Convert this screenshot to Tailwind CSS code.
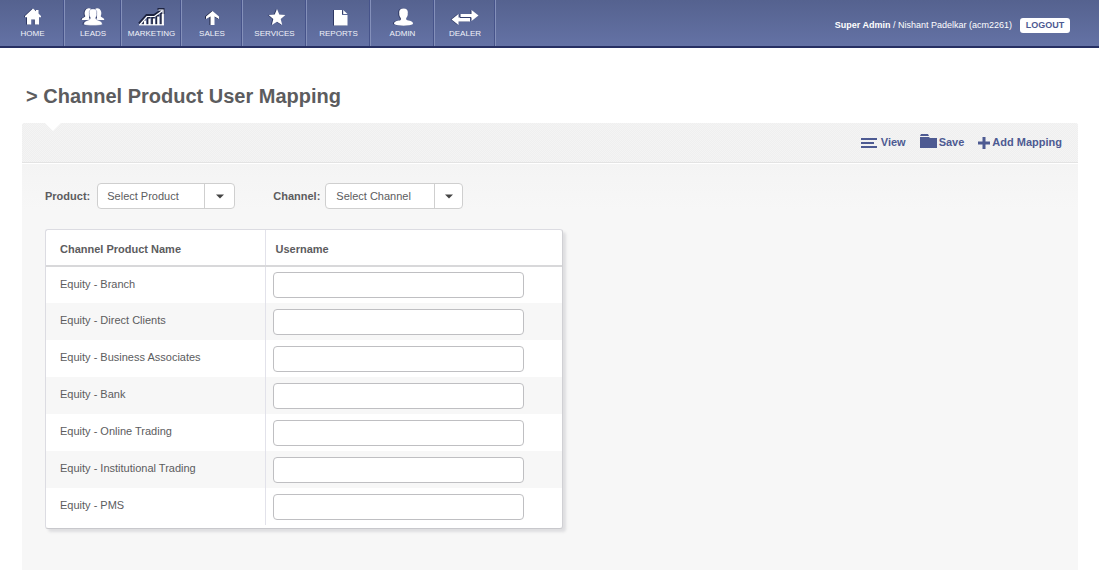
<!DOCTYPE html>
<html lang="en">
<head>
<meta charset="utf-8">
<meta name="viewport" content="width=device-width, initial-scale=1">
<title>Channel Product User Mapping</title>
<script src="https://cdn.jsdelivr.net/npm/@tailwindcss/browser@4"></script>
</head>
<body class="flex min-h-screen flex-col bg-white font-['Liberation_Sans',Arial,sans-serif] text-[11px] text-[#5c5c5e]">

<header class="flex h-12 items-stretch justify-between border-b-2 border-b-[#262f62] bg-linear-to-b from-[#55628f] to-[#6472a5] text-white">
  <nav aria-label="Main" class="flex pl-px text-[8px] leading-[10px] text-[#f0f2f9]">
    <a href="#" class="flex w-16 flex-col items-center gap-[2px] border-r border-[#8490ba] pt-[7px] shadow-[inset_-1px_0_0_#46538a]">
      <svg class="h-5 w-7 text-white drop-shadow-[-1px_0_0_#2d3762]" viewBox="0 0 28 20" fill="currentColor"><path d="M14 1.500l3 2.800V3h2.500v3.500L22 9v1.200h-2V17.500h-4.200v-5h-3.600v5H8v-7.300H6V9z"/></svg>
      HOME
    </a>
    <a href="#" class="flex w-[57px] flex-col items-center gap-[2px] border-r border-[#8490ba] pt-[7px] shadow-[inset_-1px_0_0_#46538a]">
      <svg class="h-5 w-7 text-white drop-shadow-[-1px_0_0_#2d3762]" viewBox="0 0 28 20" fill="currentColor"><path d="M8.500 1.500c1.600-.5 3-.2 3.500.4L10 5v5.500l1 2.500H2.700c.1-2.500 3.500-2.300 3.600-4C5.200 7.500 5.200 2.500 8.500 1.500zM19.500 1.500c-1.600-.5-3-.2-3.500.4L18 5v5.500l-1 2.500h8.300c-.1-2.500-3.500-2.300-3.600-4 1.100-1.500 1.100-6.500-2.200-7.500z"/><path d="M14 2c3.300 0 4.200 2 3.700 4.700.4 1.400-.2 2.800-1 3.600-.5 2.200.8 2.400 2.800 3.100 2.600.8 3.700 1.800 3.700 4.100-3 1.300-15.400 1.300-18.400 0 0-2.300 1.100-3.300 3.700-4.100 2-.7 3.300-.9 2.800-3.100-.8-.8-1.400-2.200-1-3.600C9.800 4 10.700 2 14 2z" stroke="#7a87b3" stroke-width=".4"/></svg>
      LEADS
    </a>
    <a href="#" class="flex w-15 flex-col items-center gap-[2px] border-r border-[#8490ba] pt-[7px] shadow-[inset_-1px_0_0_#46538a]">
      <svg class="h-5 w-7 text-white" viewBox="0 0 28 20" fill="none" stroke="currentColor"><path d="M1 16.500L8.500 8h7.500L23 3.200M19.500 2h6v5" stroke="#1d2340" stroke-width="2"/><path d="M6 18v-5M10.500 18v-8M15 18v-8M19.300 18V8M23.800 18V5.500" stroke="#1d2340" stroke-width="3.200"/><path d="M2 17.500L9 9.500h7.500L24 4M20.500 3H25v4" stroke-width="1.200"/><path d="M1 17.800h25" stroke-width="1.200"/><path d="M7 18v-4.500M11.500 18v-6.500M16 18v-6.500M20.300 18V9.500M24.800 18V7" stroke-width="2.200"/></svg>
      MARKETING
    </a>
    <a href="#" class="flex w-[61px] flex-col items-center gap-[2px] border-r border-[#8490ba] pt-[7px] shadow-[inset_-1px_0_0_#46538a]">
      <svg class="h-5 w-7 text-white drop-shadow-[-1px_0_0_#1d2340]" viewBox="0 0 28 20" fill="currentColor"><path d="M14.500 4l6.500 5.500v2.500l-4.500-2.500V18h-4V9.500L8 12V9.500z"/></svg>
      SALES
    </a>
    <a href="#" class="flex w-16 flex-col items-center gap-[2px] border-r border-[#8490ba] pt-[7px] shadow-[inset_-1px_0_0_#46538a]">
      <svg class="h-5 w-7 text-white drop-shadow-[-1px_0_0_#2d3762]" viewBox="0 0 28 20" fill="currentColor"><path d="M16 2l2.300 5.600 6.100.4-4.700 4 1.500 6L16 14.700 10.800 18l1.500-6-4.700-4 6.100-.4z"/></svg>
      SERVICES
    </a>
    <a href="#" class="flex w-16 flex-col items-center gap-[2px] border-r border-[#8490ba] pt-[7px] shadow-[inset_-1px_0_0_#46538a]">
      <svg class="h-5 w-7 text-white drop-shadow-[-1px_0_0_#2d3762]" viewBox="0 0 28 20" fill="currentColor"><path d="M9 3h8v5h5.500v10.500H9z"/><path d="M18.200 3l4.300 4h-4.300z"/></svg>
      REPORTS
    </a>
    <a href="#" class="flex w-16 flex-col items-center gap-[2px] border-r border-[#8490ba] pt-[7px] shadow-[inset_-1px_0_0_#46538a]">
      <svg class="h-5 w-7 text-white drop-shadow-[-1px_0_0_#2d3762]" viewBox="0 0 28 20" fill="currentColor"><path d="M14.500 1.500c3.400 0 4.800 2.200 4.200 5 .3 2-.5 3.300-1.500 4.500-.3 2 .4 2.200 2.500 2.600 3 .6 4.300 1.400 4.300 3.400-3 2.200-16 2.200-19 0 0-2 1.500-2.800 4.500-3.400 2.100-.4 2.600-.6 2.300-2.600-1-1.200-1.800-2.500-1.500-4.500-.6-2.800.8-5 4.200-5z"/></svg>
      ADMIN
    </a>
    <a href="#" class="flex w-[61px] flex-col items-center gap-[2px] border-r border-[#8490ba] pt-[7px] shadow-[inset_-1px_0_0_#46538a]">
      <svg class="h-5 w-7 text-white drop-shadow-[-1px_0_0_#2d3762]" viewBox="0 0 28 20" fill="currentColor"><path d="M20.500 3l7 5.500-7 5.500v-3.500H9.500V7h11z"/><path d="M7.500 7L0.500 12.500l7 5.500v-3.500h11.500V10.500H7.500z"/><path d="M9 10.500h11" stroke="#35406f" stroke-width="1"/></svg>
      DEALER
    </a>
  </nav>
  <div class="flex items-center gap-2 pt-[5px] pr-[29px] text-[9px]">
    <p><b>Super Admin</b> / Nishant Padelkar (acm2261)</p>
    <button type="button" class="h-[15px] w-[50px] rounded-[3px] bg-white text-[9px] leading-[15px] font-bold text-[#4d5a92]">LOGOUT</button>
  </div>
</header>

<main class="flex grow flex-col pt-8 pr-[21px] pl-[22px]">
  <h1 class="pl-1 text-[20px] leading-8 font-bold">&gt; Channel Product User Mapping</h1>

  <section class="mt-[11px] grow rounded-t-[3px] bg-[#f7f7f7]">
    <div class="relative flex h-10 items-center justify-end gap-[14px] rounded-t-[3px] border-b border-[#e3e3e3] bg-[#f2f2f2] bg-[conic-gradient(#f4f4f4_25%,#efefef_0_50%,#f4f4f4_0_75%,#efefef_0)] bg-[length:2px_2px] pr-4 font-bold text-[#4d5a92]">
      <span class="absolute top-0 left-[23px] h-2 w-4 bg-white [clip-path:polygon(0_0,100%_0,50%_100%)]"></span>
      <button type="button" class="flex items-center gap-1">
        <svg class="h-4 w-4" viewBox="0 0 16 16" fill="currentColor"><path d="M0 3h16v2H0zM0 7h13v2H0zM0 11h16v2H0z"/></svg>
        View
      </button>
      <button type="button" class="flex items-center gap-[2px]">
        <svg class="mb-1 h-4 w-[17px]" viewBox="0 0 17 16" fill="currentColor"><path d="M1 1h7l1 2H0zM0 4h9l1 1h7v10H0z"/></svg>
        Save
      </button>
      <button type="button" class="flex items-center gap-[2px]">
        <svg class="h-3 w-3" viewBox="0 0 12 12" fill="currentColor"><path d="M4.500 0h3v4.500H12v3H7.500V12h-3V7.500H0v-3h4.500z"/></svg>
        Add Mapping
      </button>
    </div>

    <div class="flex gap-[38px] border-t border-white bg-linear-to-b from-[#f4f4f4] to-[#f7f7f7] pt-[19px] pl-[23px]">
      <div class="flex items-center gap-[7px]">
        <label for="product" class="font-bold">Product:</label>
        <div class="relative">
          <select id="product" class="h-[26px] w-[138px] appearance-none rounded-[4px] border border-[#cfcfcf] bg-white pr-8 pl-[9px]"><option>Select Product</option></select>
          <span class="pointer-events-none absolute inset-y-0 right-0 flex w-[31px] items-center justify-center border-l border-[#cfcfcf]"><svg class="h-[5px] w-2" viewBox="0 0 8 5" fill="#444"><path d="M0 0.500h8L4 4.500z"/></svg></span>
        </div>
      </div>
      <div class="flex items-center gap-[5px]">
        <label for="channel" class="font-bold">Channel:</label>
        <div class="relative">
          <select id="channel" class="h-[26px] w-[138px] appearance-none rounded-[4px] border border-[#cfcfcf] bg-white pr-8 pl-[10px]"><option>Select Channel</option></select>
          <span class="pointer-events-none absolute inset-y-0 right-0 flex w-[29px] items-center justify-center border-l border-[#cfcfcf]"><svg class="h-[5px] w-2" viewBox="0 0 8 5" fill="#444"><path d="M0 0.500h8L4 4.500z"/></svg></span>
        </div>
      </div>
    </div>

    <div class="mt-5 ml-[23px] max-w-[518px] rounded-[3px] border border-[#dcdce2] border-r-[#d0d0d4] border-b-[#c8c8cc] bg-white pb-[3px] shadow-[3px_3px_3px_#dedee0]">
      <table class="w-full table-fixed text-left">
        <thead>
          <tr class="h-9 border-b-2 border-[#d8d8da]">
            <th scope="col" class="w-[219px] border-r border-[#e2e2ea] pt-1 pl-[14px]">Channel Product Name</th>
            <th scope="col" class="pt-1 pl-[10px]">Username</th>
          </tr>
        </thead>
        <tbody>
          <tr class="h-[37px] even:bg-[#f7f7f7]">
            <td class="border-r border-[#e2e2ea] pb-[2px] pl-[14px]"><label for="u1">Equity - Branch</label></td>
            <td class="pl-[7px]"><input id="u1" type="text" class="block h-[26px] w-[251px] rounded-[4px] border border-[#bfbfc2] bg-white px-2"></td>
          </tr>
          <tr class="h-[37px] even:bg-[#f7f7f7]">
            <td class="border-r border-[#e2e2ea] pb-[2px] pl-[14px]"><label for="u2">Equity - Direct Clients</label></td>
            <td class="pl-[7px]"><input id="u2" type="text" class="block h-[26px] w-[251px] rounded-[4px] border border-[#bfbfc2] bg-white px-2"></td>
          </tr>
          <tr class="h-[37px] even:bg-[#f7f7f7]">
            <td class="border-r border-[#e2e2ea] pb-[2px] pl-[14px]"><label for="u3">Equity - Business Associates</label></td>
            <td class="pl-[7px]"><input id="u3" type="text" class="block h-[26px] w-[251px] rounded-[4px] border border-[#bfbfc2] bg-white px-2"></td>
          </tr>
          <tr class="h-[37px] even:bg-[#f7f7f7]">
            <td class="border-r border-[#e2e2ea] pb-[2px] pl-[14px]"><label for="u4">Equity - Bank</label></td>
            <td class="pl-[7px]"><input id="u4" type="text" class="block h-[26px] w-[251px] rounded-[4px] border border-[#bfbfc2] bg-white px-2"></td>
          </tr>
          <tr class="h-[37px] even:bg-[#f7f7f7]">
            <td class="border-r border-[#e2e2ea] pb-[2px] pl-[14px]"><label for="u5">Equity - Online Trading</label></td>
            <td class="pl-[7px]"><input id="u5" type="text" class="block h-[26px] w-[251px] rounded-[4px] border border-[#bfbfc2] bg-white px-2"></td>
          </tr>
          <tr class="h-[37px] even:bg-[#f7f7f7]">
            <td class="border-r border-[#e2e2ea] pb-[2px] pl-[14px]"><label for="u6">Equity - Institutional Trading</label></td>
            <td class="pl-[7px]"><input id="u6" type="text" class="block h-[26px] w-[251px] rounded-[4px] border border-[#bfbfc2] bg-white px-2"></td>
          </tr>
          <tr class="h-[37px] even:bg-[#f7f7f7]">
            <td class="border-r border-[#e2e2ea] pb-[2px] pl-[14px]"><label for="u7">Equity - PMS</label></td>
            <td class="pl-[7px]"><input id="u7" type="text" class="block h-[26px] w-[251px] rounded-[4px] border border-[#bfbfc2] bg-white px-2"></td>
          </tr>
        </tbody>
      </table>
    </div>
  </section>
</main>
</body>
</html>
